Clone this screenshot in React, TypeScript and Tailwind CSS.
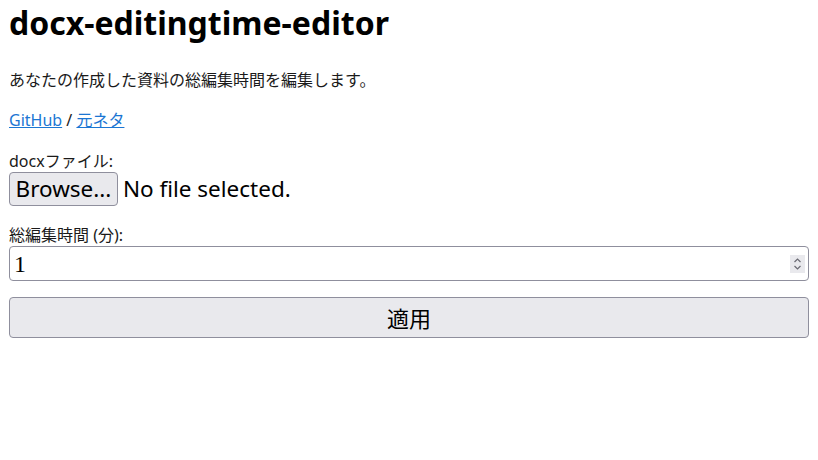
import React from "react";

const body = "font-['Noto_Sans','Noto_Sans_CJK_JP',sans-serif]";
const control = "font-['Noto_Sans','Noto_Sans_CJK_JP',sans-serif]";

function Spinner() {
  return (
    <div className="flex h-[18px] w-[15px] flex-col items-center justify-center bg-[#e9e9ed]">
      <svg width="9" height="14" viewBox="0 0 9 14" fill="none" stroke="#6b6b74" strokeWidth="1.2">
        <path d="M1.5 5 L4.5 2 L7.5 5" />
        <path d="M1.5 9 L4.5 12 L7.5 9" />
      </svg>
    </div>
  );
}

export default function App() {
  return (
    <div className={`min-h-[460px] w-full bg-white px-[9px] text-[16px] leading-[24px] text-[#1a1a1a] ${body}`}>
      <h1 className="pt-px text-[32px] font-bold leading-[44px] text-black">docx-editingtime-editor</h1>

      <p className="mt-[23px]">あなたの作成した資料の総編集時間を編集します。</p>

      <p className="mt-[16px]">
        <a href="#" className="text-[#1b76d3] underline">GitHub</a>
        {" / "}
        <a href="#" className="text-[#1b76d3] underline">元ネタ</a>
      </p>

      <form className="mt-[18px] flex flex-col">
        <label className="block leading-[22px]">docxファイル:</label>
        <div className="flex items-center">
          <button
            type="button"
            className={`h-[34px] rounded-[4px] border border-[#8f8f9d] bg-[#e9e9ed] px-[5.5px] text-[22.5px] leading-none text-black ${control}`}
          >
            Browse...
          </button>
          <span className={`ml-[5px] text-[22.5px] leading-none text-black ${control}`}>No file selected.</span>
        </div>

        <label className="mt-[18px] block leading-[22px]">総編集時間 (分):</label>
        <div className="flex h-[35px] items-center rounded-[4px] border border-[#8f8f9d] bg-white pl-[4px] pr-[3px]">
          <span className="flex-1 font-['Liberation_Serif',serif] text-[24px] leading-none text-black">1</span>
          <Spinner />
        </div>

        <button
          type="button"
          className={`mt-[16px] h-[41px] w-full rounded-[4px] border border-[#8f8f9d] bg-[#e9e9ed] text-[22px] leading-none text-black ${control}`}
        >
          適用
        </button>
      </form>
    </div>
  );
}
